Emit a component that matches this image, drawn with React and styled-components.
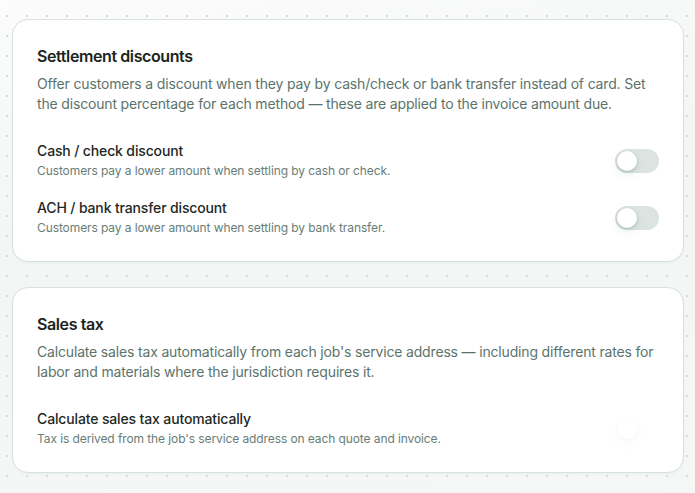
import styled, { createGlobalStyle } from 'styled-components';

const GlobalStyle = createGlobalStyle`
  html, body {
    margin: 0;
    padding: 0;
  }
  body {
    font-family: Inter, 'Noto Sans', sans-serif;
    background-color: #f4f7f5;
    background-image:
      radial-gradient(circle at 1px 1px, #d5ddd9 1px, transparent 1.2px),
      linear-gradient(170deg, #fbfcfb 0%, #f3f6f4 40%, #f4f7f5 100%);
    background-size: 20px 20px, 100% 100%;
    background-position: 6px 15px, 0 0;
    min-height: 493px;
    -webkit-font-smoothing: antialiased;
  }
`;

const Page = styled.div`
  display: flex;
  flex-direction: column;
  gap: 25px;
  padding: 19px 11px 20px 12px;
`;

const Card = styled.section`
  background: #ffffff;
  border: 1px solid #d8e2de;
  border-radius: 16px;
  padding: 24px;
  box-shadow: 0 1px 2px rgba(40, 70, 60, 0.05);
`;

const CardTitle = styled.h2`
  margin: 0;
  font-size: 16px;
  line-height: 24px;
  font-weight: 600;
  color: #1b2420;
  letter-spacing: -0.025em;
`;

const CardText = styled.p`
  margin: 6px 0 0;
  font-size: 14px;
  line-height: 20px;
  color: #5b736c;
  letter-spacing: -0.012em;
`;

const Rows = styled.div`
  display: flex;
  flex-direction: column;
  gap: 18px;
  margin-top: 27px;
`;

const Row = styled.div`
  display: flex;
  align-items: center;
  justify-content: space-between;
  gap: 16px;
`;

const RowText = styled.div`
  display: flex;
  flex-direction: column;
  gap: 1px;
`;

const RowTitle = styled.div`
  font-size: 14px;
  line-height: 20px;
  font-weight: 500;
  color: #1e2824;
  letter-spacing: -0.01em;
`;

const RowHint = styled.div`
  font-size: 12px;
  line-height: 18px;
  color: #687d77;
  letter-spacing: -0.008em;
`;

const Track = styled.button`
  flex: none;
  width: 44px;
  height: 24px;
  border: none;
  border-radius: 12px;
  padding: 2px;
  background: ${(p) => (p.$faded ? 'transparent' : '#dbe4e1')};
  display: flex;
  align-items: center;
  cursor: pointer;
  opacity: ${(p) => (p.$faded ? 0.18 : 1)};
`;

const Thumb = styled.span`
  width: 20px;
  height: 20px;
  border-radius: 50%;
  background: #ffffff;
  box-shadow: 0 1px 3px rgba(30, 60, 50, 0.22), 0 4px 10px rgba(30, 60, 50, 0.08);
`;

const Toggle = ({ faded }) => (
  <Track type="button" role="switch" aria-checked="false" $faded={faded}>
    <Thumb />
  </Track>
);

const SettingRow = ({ title, hint, faded }) => (
  <Row>
    <RowText>
      <RowTitle>{title}</RowTitle>
      <RowHint>{hint}</RowHint>
    </RowText>
    <Toggle faded={faded} />
  </Row>
);

export default function App() {
  return (
    <>
      <GlobalStyle />
      <Page>
        <Card>
          <CardTitle>Settlement discounts</CardTitle>
          <CardText>
            Offer customers a discount when they pay by cash/check or bank transfer instead of card. Set
            the discount percentage for each method — these are applied to the invoice amount due.
          </CardText>
          <Rows>
            <SettingRow
              title="Cash / check discount"
              hint="Customers pay a lower amount when settling by cash or check."
            />
            <SettingRow
              title="ACH / bank transfer discount"
              hint="Customers pay a lower amount when settling by bank transfer."
            />
          </Rows>
        </Card>
        <Card>
          <CardTitle>Sales tax</CardTitle>
          <CardText>
            Calculate sales tax automatically from each job's service address — including different rates for
            labor and materials where the jurisdiction requires it.
          </CardText>
          <Rows>
            <SettingRow
              title="Calculate sales tax automatically"
              hint="Tax is derived from the job's service address on each quote and invoice."
              faded
            />
          </Rows>
        </Card>
      </Page>
    </>
  );
}
